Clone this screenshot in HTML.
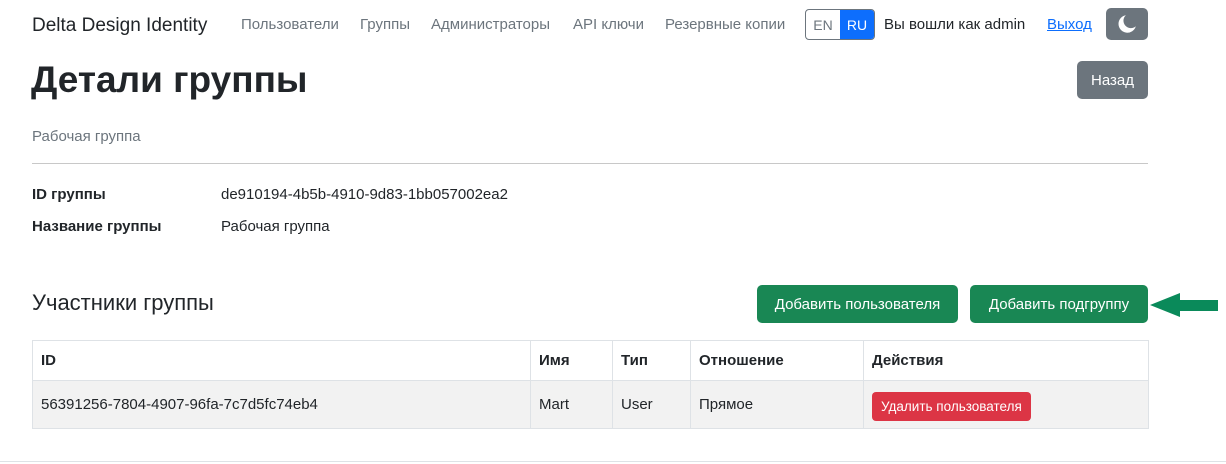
<!DOCTYPE html>
<html><head><meta charset="utf-8"><style>
*{box-sizing:border-box;margin:0;padding:0}
body{width:1226px;height:464px;position:relative;background:#fff;font-family:"Liberation Sans",sans-serif;color:#212529;overflow:hidden}
.a{position:absolute;white-space:nowrap}
.nav{font-size:15px;color:#6c757d;top:16px}
.btn{position:absolute;border-radius:5px;color:#fff;display:flex;align-items:center;justify-content:center;white-space:nowrap}
.g{background:#198754;font-size:15px}
td,th{border:1px solid #dee2e6;text-align:left;padding:0 8px;font-size:15px}
th{font-weight:bold}
</style></head><body>
<div class="a" style="left:32px;top:15px;font-size:19px">Delta Design Identity</div>
<div class="a nav" style="left:241px">Пользователи</div>
<div class="a nav" style="left:360px">Группы</div>
<div class="a nav" style="left:431px">Администраторы</div>
<div class="a nav" style="left:573px">API ключи</div>
<div class="a nav" style="left:665px">Резервные копии</div>
<div class="a" style="left:805px;top:9px;width:70px;height:31px;border:1px solid #6c757d;border-radius:4px;overflow:hidden;display:flex;font-size:14px">
<div style="width:34px;display:flex;align-items:center;justify-content:center;color:#6c757d">EN</div>
<div style="flex:1;background:#0d6efd;color:#fff;display:flex;align-items:center;justify-content:center">RU</div></div>
<div class="a" style="left:884px;top:16px;font-size:15px">Вы вошли как admin</div>
<div class="a" style="left:1047px;top:16px;font-size:15px;color:#0d6efd;text-decoration:underline">Выход</div>
<div class="btn" style="left:1106px;top:8px;width:42px;height:32px;background:#6c757d">
<svg width="22" height="22" viewBox="0 0 20 20"><path d="M9 2A8 8 0 1 0 18 12A6.5 6.5 0 0 1 9 2Z" fill="#fff"/></svg></div>
<div class="a" style="left:31px;top:56px;font-size:37px;font-weight:bold;line-height:48px">Детали группы</div>
<div class="btn" style="left:1077px;top:61px;width:71px;height:38px;background:#6c757d;font-size:15px">Назад</div>
<div class="a" style="left:32px;top:128px;font-size:15px;color:#6c757d">Рабочая группа</div>
<div class="a" style="left:32px;top:163px;width:1116px;border-top:1px solid #c8c8c8"></div>
<div class="a" style="left:32px;top:186px;font-size:15px;font-weight:bold">ID группы</div>
<div class="a" style="left:221px;top:186px;font-size:15px">de910194-4b5b-4910-9d83-1bb057002ea2</div>
<div class="a" style="left:32px;top:218px;font-size:15px;font-weight:bold">Название группы</div>
<div class="a" style="left:221px;top:218px;font-size:15px">Рабочая группа</div>
<div class="a" style="left:32px;top:290px;font-size:22px">Участники группы</div>
<div class="btn g" style="left:757px;top:285px;width:201px;height:38px">Добавить пользователя</div>
<div class="btn g" style="left:970px;top:285px;width:178px;height:38px">Добавить подгруппу</div>
<svg class="a" style="left:1150px;top:291px" width="70" height="28" viewBox="0 0 70 28"><path d="M0 14L30 2V9H68V20H30V26Z" fill="#0a8a5a"/></svg>
<table class="a" style="left:32px;top:340px;width:1117px;border-collapse:collapse">
<tr style="height:40px"><th style="width:498px">ID</th><th style="width:82px">Имя</th><th style="width:78px">Тип</th><th style="width:173px">Отношение</th><th>Действия</th></tr>
<tr style="height:48px;background:#f2f2f2"><td>56391256-7804-4907-96fa-7c7d5fc74eb4</td><td>Mart</td><td>User</td><td>Прямое</td><td><span style="display:inline-block;background:#dc3545;color:#fff;font-size:13.5px;padding:7px 9px;border-radius:4px;margin-top:4px">Удалить пользователя</span></td></tr>
</table>
<div class="a" style="left:0;top:461px;width:1226px;border-top:1px solid #dee2e6"></div>
</body></html>
